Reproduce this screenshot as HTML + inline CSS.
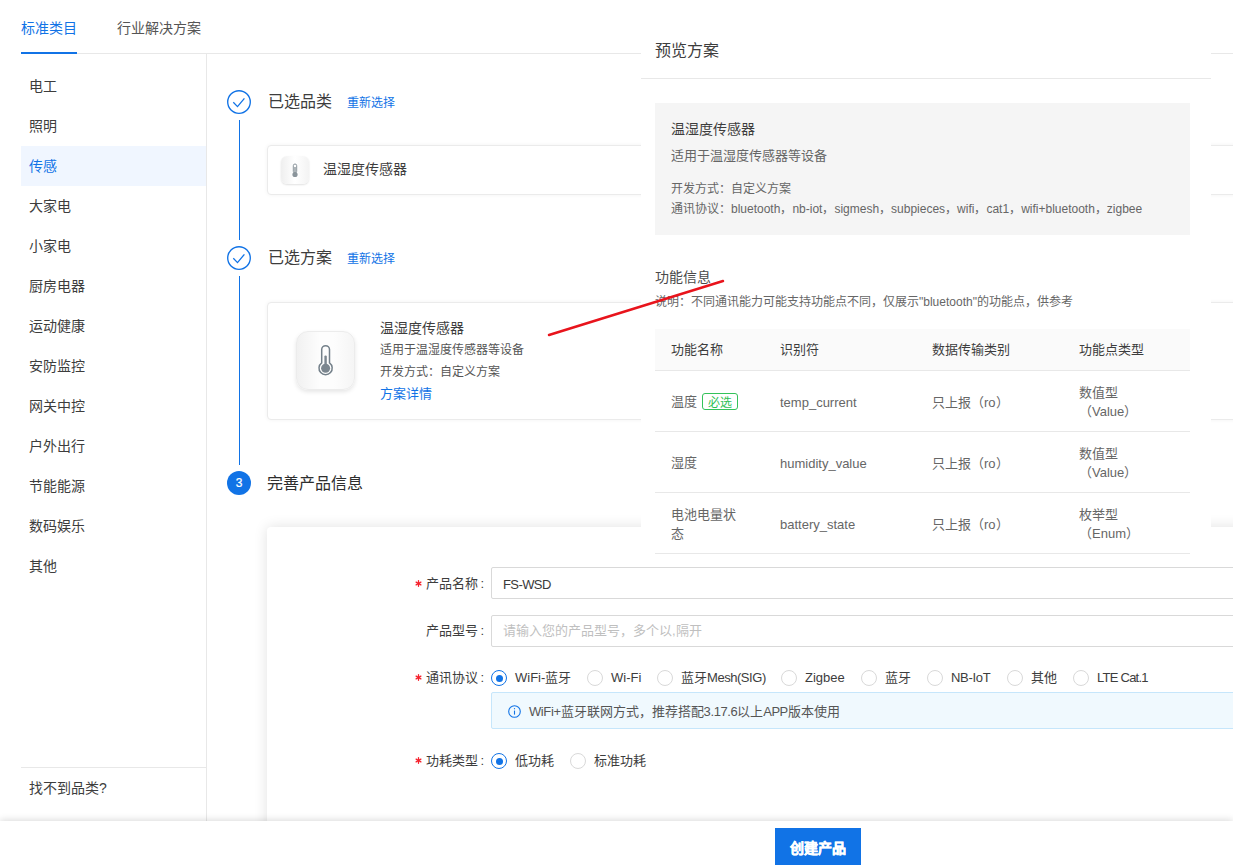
<!DOCTYPE html>
<html lang="zh-CN"><head><meta charset="utf-8">
<style>
*{box-sizing:border-box;margin:0;padding:0}
html,body{width:1233px;height:865px;overflow:hidden;background:#fff}
body{position:relative;font-family:"Liberation Sans",sans-serif;color:#3d3d3d;font-size:14px}
.a{position:absolute;white-space:nowrap}
.t{position:absolute;white-space:nowrap;line-height:20px}
.blue{color:#1173e6}
.hl{position:absolute;height:1px;background:#e8e8e8}
.vl{position:absolute;width:1px;background:#e8e8e8}
.side .t{left:29px;font-size:14px;color:#3d3d3d}
.circ{position:absolute;width:24px;height:24px;border-radius:50%;border:1.5px solid #1173e6;left:227px}
.sline{position:absolute;left:239px;width:1px;background:#1173e6}
.card{position:absolute;left:267px;width:1100px;background:#fff;border:1px solid #ebebeb;border-radius:4px;box-shadow:0 0 4px rgba(0,0,0,.05)}
.lbl{position:absolute;font-size:13px;color:#3d3d3d;line-height:20px;white-space:nowrap;text-align:right;right:749px}
.req{position:absolute;left:416px;color:#f5222d;font-size:13px;line-height:20px}
.inp{position:absolute;left:491px;width:900px;height:32px;border:1px solid #d9d9d9;border-radius:2px;background:#fff}
.radio{position:absolute;width:16px;height:16px;border-radius:50%;border:1px solid #d9d9d9;background:#fff}
.radio.on{border-color:#1173e6}
.radio.on::after{content:"";position:absolute;left:3.5px;top:3.5px;width:7px;height:7px;border-radius:50%;background:#1173e6}
.rl{position:absolute;font-size:13px;color:#3d3d3d;line-height:20px;white-space:nowrap}
.panel{position:absolute;left:641px;top:0;width:570px;height:560px;background:#fff}
.th{position:absolute;font-size:13px;color:#3d3d3d;line-height:20px;white-space:nowrap}
.td{position:absolute;font-size:13px;color:#666;line-height:20px;white-space:nowrap}
</style></head><body>

<!-- tabs -->
<div class="t blue" style="left:21px;top:18px;font-size:14px">标准类目</div>
<div class="t" style="left:117px;top:18px;font-size:14px;color:#555">行业解决方案</div>
<div class="hl" style="left:21px;top:53px;width:1212px"></div>
<div class="a" style="left:21px;top:52px;width:56px;height:2px;background:#1173e6"></div>

<!-- sidebar -->
<div class="vl" style="left:206px;top:54px;height:767px"></div>
<div class="a" style="left:21px;top:146px;width:185px;height:40px;background:#f0f6ff"></div>
<div class="side">
<div class="t" style="top:76px">电工</div>
<div class="t" style="top:116px">照明</div>
<div class="t blue" style="top:156px;color:#1173e6">传感</div>
<div class="t" style="top:196px">大家电</div>
<div class="t" style="top:236px">小家电</div>
<div class="t" style="top:276px">厨房电器</div>
<div class="t" style="top:316px">运动健康</div>
<div class="t" style="top:356px">安防监控</div>
<div class="t" style="top:396px">网关中控</div>
<div class="t" style="top:436px">户外出行</div>
<div class="t" style="top:476px">节能能源</div>
<div class="t" style="top:516px">数码娱乐</div>
<div class="t" style="top:556px">其他</div>
<div class="t" style="top:778px">找不到品类?</div>
</div>
<div class="hl" style="left:21px;top:767px;width:185px"></div>

<!-- steps -->
<svg class="a" style="left:227px;top:90px" width="24" height="24" viewBox="0 0 24 24"><circle cx="12" cy="12" r="11.3" fill="none" stroke="#1173e6" stroke-width="1.35"/><path d="M6.3 12.3 L10.5 16.6 L17.4 8.3" fill="none" stroke="#1173e6" stroke-width="1.3"/></svg>
<svg class="a" style="left:227px;top:246px" width="24" height="24" viewBox="0 0 24 24"><circle cx="12" cy="12" r="11.3" fill="none" stroke="#1173e6" stroke-width="1.35"/><path d="M6.3 12.3 L10.5 16.6 L17.4 8.3" fill="none" stroke="#1173e6" stroke-width="1.3"/></svg>
<div class="a" style="left:227px;top:471px;width:24px;height:24px;border-radius:50%;background:#1173e6;color:#fff;font-size:12px;line-height:25px;text-align:center;-webkit-text-stroke:0.2px #fff">3</div>
<div class="sline" style="top:120px;height:120px"></div>
<div class="sline" style="top:276px;height:189px"></div>

<div class="t" style="left:268px;top:92px;font-size:16px">已选品类</div>
<div class="t blue" style="left:347px;top:93px;font-size:12px">重新选择</div>
<div class="t" style="left:268px;top:248px;font-size:16px">已选方案</div>
<div class="t blue" style="left:347px;top:249px;font-size:12px">重新选择</div>
<div class="t" style="left:267px;top:474px;font-size:16px;color:#2e2e2e">完善产品信息</div>

<!-- card1 -->
<div class="card" style="top:145px;height:50px"></div>
<div class="a" style="left:281px;top:156px;width:28px;height:28px;border-radius:6px;background:linear-gradient(90deg,#efefef,#fff 50%,#f3f3f3);box-shadow:0 1px 2px rgba(0,0,0,.12)"></div>
<svg class="a" style="left:281px;top:156px" width="28" height="28" viewBox="0 0 28 28"><rect x="12.3" y="8" width="3.4" height="9" rx="1.7" fill="none" stroke="#8a949b" stroke-width="1"/><circle cx="14" cy="18.5" r="2.6" fill="#8a949b"/><rect x="13.3" y="11" width="1.4" height="7" fill="#8a949b"/></svg>
<div class="t" style="left:323px;top:159px;font-size:14px">温湿度传感器</div>

<!-- card2 -->
<div class="card" style="top:302px;height:118px"></div>
<div class="a" style="left:296px;top:331px;width:59px;height:59px;border-radius:12px;border:1px solid #ececec;background:linear-gradient(90deg,#f1f1f1,#fdfdfd 40%,#fdfdfd 65%,#f5f5f5);box-shadow:0 2px 4px rgba(0,0,0,.10)"></div>
<svg class="a" style="left:296px;top:331px" width="59" height="59" viewBox="0 0 59 59"><path d="M25.7 31.8 V18.6 A3.9 3.9 0 0 1 33.5 18.6 V31.8 A6.6 6.6 0 1 1 25.7 31.8 Z" fill="none" stroke="#74808a" stroke-width="1.5"/><circle cx="29.6" cy="37.3" r="4.5" fill="#7b868f"/><rect x="28.4" y="24.5" width="2.4" height="12" rx="1.1" fill="#7b868f"/></svg>
<div class="t" style="left:380px;top:318px;font-size:14px">温湿度传感器</div>
<div class="t" style="left:380px;top:340px;font-size:12px;color:#555">适用于温湿度传感器等设备</div>
<div class="t" style="left:380px;top:362px;font-size:12px;color:#555">开发方式：自定义方案</div>
<div class="t blue" style="left:380px;top:384px;font-size:13px">方案详情</div>

<!-- form card -->
<div class="card" style="top:527px;height:400px;border:none;box-shadow:0 0 14px rgba(0,0,0,.12)"></div>

<svg class="a" style="left:415px;top:580px" width="7" height="7" viewBox="0 0 7 7"><g stroke="#f5222d" stroke-width="1.3" stroke-linecap="round"><line x1="3.5" y1="0.7" x2="3.5" y2="6.3"/><line x1="1.1" y1="2.1" x2="5.9" y2="4.9"/><line x1="1.1" y1="4.9" x2="5.9" y2="2.1"/></g></svg>
<div class="lbl" style="top:574px">产品名称<span style="margin-left:2px">:</span></div>
<div class="inp" style="top:567px"></div>
<div class="t" style="left:503px;top:575px;font-size:13px;color:#3a3a3a;letter-spacing:-0.6px">FS-WSD</div>

<div class="lbl" style="top:621px">产品型号<span style="margin-left:2px">:</span></div>
<div class="inp" style="top:615px"></div>
<div class="t" style="left:503px;top:621px;font-size:13px;color:#bfbfbf">请输入您的产品型号，多个以,隔开</div>

<svg class="a" style="left:415px;top:674px" width="7" height="7" viewBox="0 0 7 7"><g stroke="#f5222d" stroke-width="1.3" stroke-linecap="round"><line x1="3.5" y1="0.7" x2="3.5" y2="6.3"/><line x1="1.1" y1="2.1" x2="5.9" y2="4.9"/><line x1="1.1" y1="4.9" x2="5.9" y2="2.1"/></g></svg>
<div class="lbl" style="top:668px">通讯协议<span style="margin-left:2px">:</span></div>

<div class="radio on" style="left:491px;top:670px"></div><div class="rl" style="left:515px;top:668px">WiFi-蓝牙</div>
<div class="radio" style="left:587px;top:670px"></div><div class="rl" style="left:611px;top:668px">Wi-Fi</div>
<div class="radio" style="left:657px;top:670px"></div><div class="rl" style="left:681px;top:668px">蓝牙<span style="letter-spacing:-0.45px">Mesh(SIG)</span></div>
<div class="radio" style="left:781px;top:670px"></div><div class="rl" style="left:805px;top:668px">Zigbee</div>
<div class="radio" style="left:861px;top:670px"></div><div class="rl" style="left:885px;top:668px">蓝牙</div>
<div class="radio" style="left:927px;top:670px"></div><div class="rl" style="left:951px;top:668px;letter-spacing:-0.3px">NB-IoT</div>
<div class="radio" style="left:1007px;top:670px"></div><div class="rl" style="left:1031px;top:668px">其他</div>
<div class="radio" style="left:1073px;top:670px"></div><div class="rl" style="left:1097px;top:668px;letter-spacing:-0.75px">LTE Cat.1</div>

<div class="a" style="left:491px;top:692px;width:900px;height:37px;background:#f0f9fe;border:1px solid #c6e6fb;border-radius:2px"></div>
<svg class="a" style="left:508px;top:705px" width="13" height="13" viewBox="0 0 13 13"><circle cx="6.5" cy="6.5" r="5.8" fill="none" stroke="#1173e6" stroke-width="1.1"/><rect x="5.95" y="5.6" width="1.1" height="4" fill="#1173e6"/><circle cx="6.5" cy="3.7" r="0.65" fill="#1173e6"/></svg>
<div class="t" style="left:529px;top:702px;font-size:13px;color:#555"><span style="letter-spacing:-0.4px">WiFi+</span>蓝牙联网方式，推荐搭配<span style="letter-spacing:-0.4px">3.17.6</span>以上<span style="letter-spacing:-0.6px">APP</span>版本使用</div>

<svg class="a" style="left:415px;top:757px" width="7" height="7" viewBox="0 0 7 7"><g stroke="#f5222d" stroke-width="1.3" stroke-linecap="round"><line x1="3.5" y1="0.7" x2="3.5" y2="6.3"/><line x1="1.1" y1="2.1" x2="5.9" y2="4.9"/><line x1="1.1" y1="4.9" x2="5.9" y2="2.1"/></g></svg>
<div class="lbl" style="top:751px">功耗类型<span style="margin-left:2px">:</span></div>

<div class="radio on" style="left:491px;top:753px"></div><div class="rl" style="left:515px;top:751px">低功耗</div>
<div class="radio" style="left:570px;top:753px"></div><div class="rl" style="left:594px;top:751px">标准功耗</div>

<!-- footer -->
<div class="a" style="left:0;top:821px;width:1233px;height:44px;background:#fff;box-shadow:0 -1px 7px rgba(0,0,0,.15)"></div>
<div class="a" style="left:775px;top:828px;width:86px;height:40px;background:#1173e6;color:#fff;font-weight:bold;font-size:14px;line-height:40px;text-align:center;-webkit-text-stroke:0.45px #fff">创建产品</div>

<!-- preview panel -->
<div class="panel"></div>
<div class="t" style="left:655px;top:41px;font-size:16px">预览方案</div>
<div class="hl" style="left:641px;top:78px;width:570px"></div>
<div class="a" style="left:655px;top:103px;width:535px;height:132px;background:#f5f5f5"></div>
<div class="t" style="left:671px;top:119px;font-size:14px">温湿度传感器</div>
<div class="t" style="left:671px;top:146px;font-size:13px;color:#666">适用于温湿度传感器等设备</div>
<div class="t" style="left:671px;top:179px;font-size:12px;color:#666">开发方式：自定义方案</div>
<div class="t" style="left:671px;top:199px;font-size:12px;color:#666">通讯协议：bluetooth，nb-iot，sigmesh，subpieces，wifi，cat1，wifi+bluetooth，zigbee</div>

<div class="t" style="left:655px;top:267px;font-size:14px;color:#4a4a4a">功能信息</div>
<div class="t" style="left:655px;top:292px;font-size:12px;color:#666">说明：不同通讯能力可能支持功能点不同，仅展示"bluetooth"的功能点，供参考</div>

<div class="a" style="left:655px;top:329px;width:535px;height:41px;background:#fafafa"></div>
<div class="hl" style="left:655px;top:370px;width:535px"></div>
<div class="hl" style="left:655px;top:431px;width:535px"></div>
<div class="hl" style="left:655px;top:492px;width:535px"></div>
<div class="hl" style="left:655px;top:553px;width:535px"></div>

<div class="th" style="left:671px;top:340px">功能名称</div>
<div class="th" style="left:780px;top:340px">识别符</div>
<div class="th" style="left:932px;top:340px">数据传输类别</div>
<div class="th" style="left:1079px;top:340px">功能点类型</div>

<div class="td" style="left:671px;top:392px">温度</div>
<div class="a" style="left:702px;top:393px;width:36px;height:17px;border:1px solid #34c25a;border-radius:3px;color:#2fbf55;font-size:12px;line-height:18px;text-align:center">必选</div>
<div class="td" style="left:780px;top:393px">temp_current</div>
<div class="td" style="left:932px;top:393px">只上报（ro）</div>
<div class="td" style="left:1079px;top:383px">数值型</div>
<div class="td" style="left:1079px;top:402px">（Value）</div>

<div class="td" style="left:671px;top:453px">湿度</div>
<div class="td" style="left:780px;top:454px">humidity_value</div>
<div class="td" style="left:932px;top:454px">只上报（ro）</div>
<div class="td" style="left:1079px;top:444px">数值型</div>
<div class="td" style="left:1079px;top:463px">（Value）</div>

<div class="td" style="left:671px;top:505px">电池电量状</div>
<div class="td" style="left:671px;top:524px">态</div>
<div class="td" style="left:780px;top:515px">battery_state</div>
<div class="td" style="left:932px;top:515px">只上报（ro）</div>
<div class="td" style="left:1079px;top:505px">枚举型</div>
<div class="td" style="left:1079px;top:524px">（Enum）</div>

<!-- red annotation line -->
<svg class="a" style="left:0;top:0" width="1233" height="865"><line x1="549" y1="335" x2="723" y2="281" stroke="#e8141c" stroke-width="2.5" stroke-linecap="round"/></svg>

</body></html>
